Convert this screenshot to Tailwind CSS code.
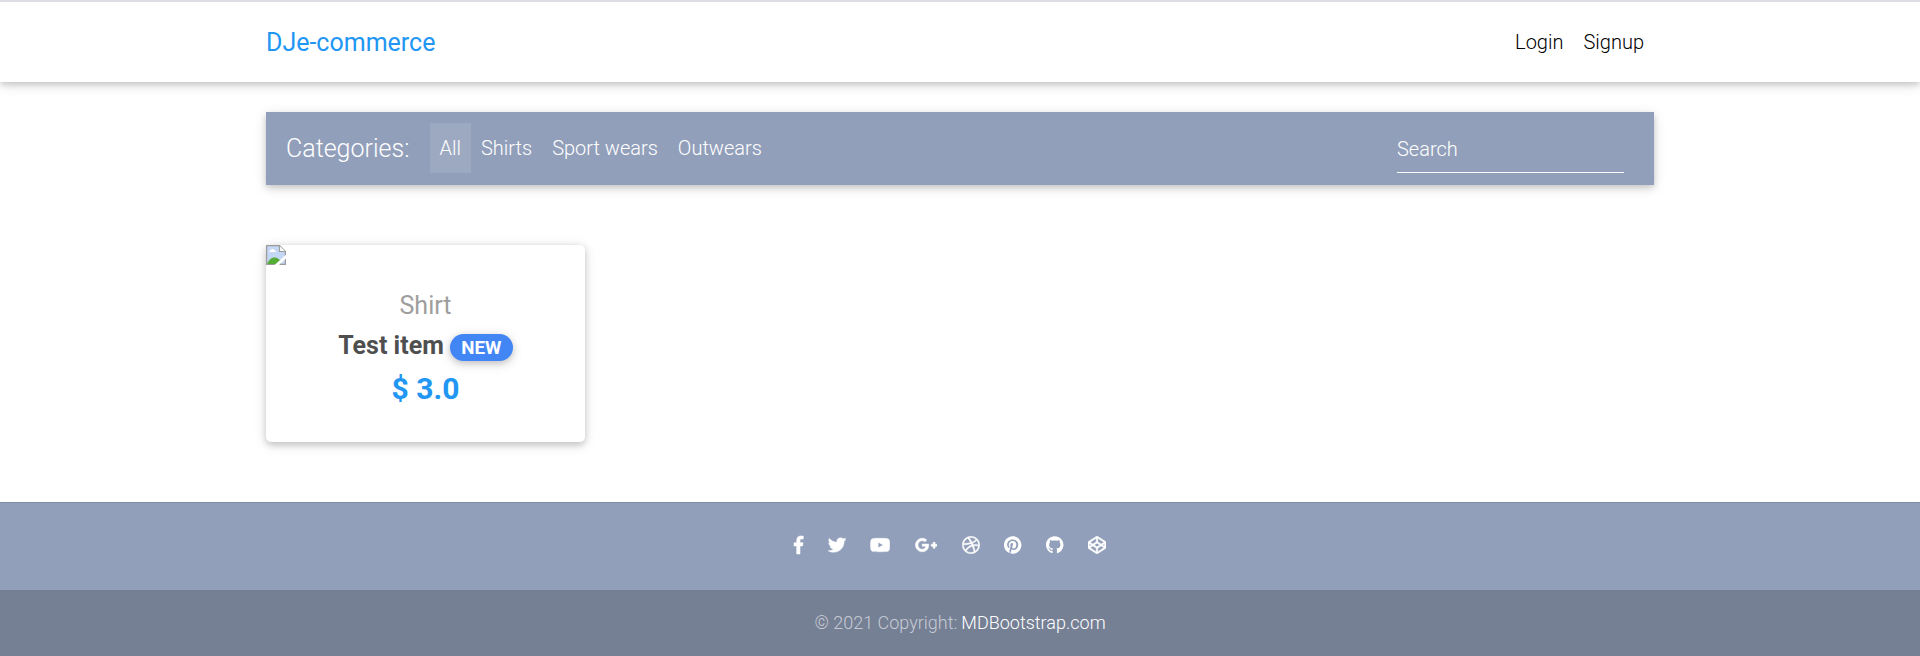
<!DOCTYPE html>
<html lang="en">
<head>
<meta charset="utf-8">
<title>DJe-commerce</title>
<script src="https://cdn.jsdelivr.net/npm/@tailwindcss/browser@4"></script>
</head>
<body class="flex h-[656px] flex-col overflow-hidden bg-white font-[Roboto,sans-serif] text-[20px] leading-[30px] font-light text-[#212529]">
<header class="h-[82px] border-t-2 border-[#dcdce2] shadow-[0_2.5px_6.25px_rgba(0,0,0,0.16),0_2.5px_12.5px_rgba(0,0,0,0.12)]">
  <nav class="mx-auto flex h-full w-[1388px] items-center justify-between">
    <a class="pt-0.5 text-[25px] font-normal text-[#2196f3]">DJe-commerce</a>
    <div class="flex gap-5 pr-[10px] text-black"><a>Login</a><a>Signup</a></div>
  </nav>
</header>
<main class="mx-auto w-[1388px] flex-1 pt-[30px]">
  <nav class="flex h-[73px] items-start bg-[#929fba] pt-[11px] pr-[30px] pl-5 leading-[50px] text-white shadow-[0_2.5px_6.25px_rgba(0,0,0,0.16),0_2.5px_12.5px_rgba(0,0,0,0.12)]">
    <span class="mr-5 w-[124px] text-[25px] leading-[52px] whitespace-nowrap">Categories:</span>
    <div class="flex">
      <a class="bg-white/10 pr-[10px] pl-[9.5px]">All</a><a class="px-[10px]">Shirts</a><a class="px-[10px]">Sport wears</a><a class="px-[10px]">Outwears</a>
    </div>
    <div class="ml-auto h-[50px] w-[227px] border-b border-white leading-[52px]">Search</div>
  </nav>
  <article class="mt-[60px] flex h-[197px] w-[319px] flex-col rounded-[5px] bg-white shadow-[0_2.5px_6.25px_rgba(0,0,0,0.16),0_2.5px_12.5px_rgba(0,0,0,0.12)]">
    <svg class="size-5 shrink-0" viewBox="0 0 20 20">
      <path d="M.6.6h13l5.8 5.8v13H.6z" fill="#c4d7f5" stroke="#9b9b9b" stroke-width="1.2"/>
      <path d="M1.2 19c1.5-4 4-6.500 7.300-6.500 2.500 0 4.500 1.300 6 3.500L15 19z" fill="#55ac36"/>
      <path d="M3 7c0-1 .8-1.500 1.600-1.500C5 4.300 5.700 4 6.500 4c1.200 0 1.800.8 2 1.600C9.400 5.600 10 6.200 10 7z" fill="#fff"/>
      <path d="M13.500.8v5.700h5.700" fill="#fff" stroke="#9b9b9b" stroke-width="1.200"/>
      <path d="M8.500 20 20 9.800v3.700L13 20z" fill="#fff"/>
    </svg>
    <div class="flex flex-col items-center pt-[26px]">
      <h5 class="text-[25px] leading-[30px] font-normal text-[#9e9e9e]">Shirt</h5>
      <div class="mt-[9px] flex h-[32px] items-center gap-[6px] text-[25px] font-bold text-[#4f4f4f]">
        <strong class="font-bold">Test item</strong>
        <span class="mt-[3px] flex h-[27px] w-[63px] items-center justify-center rounded-full bg-[#4285f4] text-[18.75px] text-white shadow-[0_2.5px_6.25px_rgba(0,0,0,0.16),0_2.5px_12.5px_rgba(0,0,0,0.12)]">NEW</span>
      </div>
      <h4 class="mt-[9px] text-[30px] leading-[36px] font-bold text-[#2196f3]">$ 3.0</h4>
    </div>
  </article>
</main>
<footer class="h-[154px] shrink-0 bg-[#929fba] text-[18px] text-white">
  <div class="flex h-[88px] items-center justify-center gap-[4.450px] border-t border-[#7f8ca6] pb-[3px]">
    <svg class="mr-5 h-[18px] w-[9.280px] overflow-visible" viewBox="0 0 264 512" fill="currentColor" stroke="currentColor" stroke-width="16"><path d="M76.700 512V283H0v-91h76.700v-71.700C76.700 42.400 124.300 0 193.800 0c33.300 0 61.900 2.500 70.200 3.600V85h-48.200c-37.800 0-45.100 18-45.100 44.300V192H256l-11.700 91h-73.600v229z"/></svg>
    <svg class="mr-5 h-[18px] w-[18px]" viewBox="0 0 512 512" fill="currentColor" stroke="currentColor" stroke-width="10"><path d="M459.370 151.716c.325 4.548.325 9.097.325 13.645 0 138.720-105.583 298.558-298.558 298.558-59.452 0-114.680-17.219-161.137-47.106 8.447.974 16.568 1.299 25.340 1.299 49.055 0 94.213-16.568 130.274-44.832-46.132-.975-84.792-31.188-98.112-72.772 6.498.974 12.995 1.624 19.818 1.624 9.421 0 18.843-1.300 27.614-3.573-48.081-9.747-84.143-51.980-84.143-102.985v-1.299c13.969 7.797 30.214 12.670 47.431 13.319-28.264-18.843-46.781-51.005-46.781-87.391 0-19.492 5.197-37.360 14.294-52.954 51.655 63.675 129.300 105.258 216.365 109.807-1.624-7.797-2.599-15.918-2.599-24.040 0-57.828 46.782-104.934 104.934-104.934 30.213 0 57.502 12.670 76.670 33.137 23.715-4.548 46.456-13.320 66.599-25.340-7.798 24.366-24.366 44.833-46.132 57.827 21.117-2.273 41.584-8.122 60.426-16.243-14.292 20.791-32.161 39.308-52.628 54.253z"/></svg>
    <svg class="mr-5 h-[18px] w-[20.250px]" viewBox="0 0 576 512" fill="currentColor" stroke="currentColor" stroke-width="14"><path d="M549.655 124.083c-6.281-23.650-24.787-42.276-48.284-48.597C458.781 64 288 64 288 64S117.220 64 74.629 75.486c-23.497 6.322-42.003 24.947-48.284 48.597-11.412 42.867-11.412 132.305-11.412 132.305s0 89.438 11.412 132.305c6.281 23.650 24.787 41.500 48.284 47.821C117.220 448 288 448 288 448s170.780 0 213.371-11.486c23.497-6.321 42.003-24.171 48.284-47.821 11.412-42.867 11.412-132.305 11.412-132.305s0-89.438-11.412-132.305zm-317.510 213.508V175.185l142.739 81.205-142.739 81.201z"/></svg>
    <svg class="mr-5 h-[18px] w-[22.500px]" viewBox="0 0 640 512" fill="currentColor" stroke="currentColor" stroke-width="14"><path d="M386.061 228.496c1.834 9.692 3.143 19.384 3.143 31.956C389.204 370.205 315.599 448 204.800 448c-106.084 0-192-85.915-192-192s85.916-192 192-192c51.864 0 95.083 18.859 128.611 50.292l-52.126 50.030c-14.145-13.621-39.028-29.599-76.485-29.599-65.484 0-118.920 54.221-118.920 121.277 0 67.056 53.436 121.277 118.920 121.277 75.961 0 104.513-54.745 108.965-82.773H204.800v-66.009h181.261zm185.406 6.437V179.200h-56.001v55.733h-55.733v56.001h55.733v55.733h56.001v-55.733H627.200v-56.001h-55.733z"/></svg>
    <svg class="mr-5 h-[18px] w-[18px]" viewBox="0 0 512 512" fill="currentColor" stroke="currentColor" stroke-width="12"><path d="M256 8C119.252 8 8 119.252 8 256s111.252 248 248 248 248-111.252 248-248S392.748 8 256 8zm163.970 114.366c29.503 36.046 47.369 81.957 47.835 131.955-6.984-1.477-77.018-15.682-147.502-6.818-5.752-14.041-11.181-26.393-18.617-41.614 78.321-31.977 113.818-77.482 118.284-83.523zM396.421 97.870c-3.810 5.427-35.697 48.286-111.021 76.519-34.712-63.776-73.185-116.168-79.040-124.008 67.176-16.193 137.966 1.270 190.061 47.489zm-230.480-33.250c5.585 7.659 43.438 60.116 78.537 122.509-99.087 26.313-186.360 25.934-195.834 25.809C62.380 147.205 106.678 92.573 165.941 64.620zM44.170 256.323c0-2.166.043-4.322.108-6.473 9.268.19 111.920 1.513 217.706-30.146 6.064 11.868 11.857 23.915 17.174 35.949-76.599 21.575-146.194 83.527-180.531 142.306C64.794 360.405 44.170 310.730 44.170 256.323zm81.807 167.113c22.127-45.233 82.178-103.622 167.579-132.756 29.740 77.283 42.039 142.053 45.189 160.638-68.112 29.013-150.015 21.053-212.768-27.882zm248.380 8.489c-2.171-12.886-13.446-74.897-41.152-151.033 66.380-10.626 124.700 6.768 131.947 9.055-9.442 58.941-43.273 109.844-90.795 141.978z"/></svg>
    <svg class="mr-5 h-[18px] w-[17.440px]" viewBox="0 0 496 512" fill="currentColor"><path d="M496 256c0 137-111 248-248 248-25.600 0-50.200-3.900-73.400-11.100 10.100-16.500 25.200-43.500 30.800-65 3-11.600 15.400-59 15.400-59 8.100 15.400 31.700 28.500 56.800 28.500 74.800 0 128.700-68.800 128.700-154.300 0-81.900-66.900-143.200-152.900-143.200-107 0-163.900 71.800-163.900 150.100 0 36.400 19.400 81.700 50.300 96.100 4.700 2.200 7.200 1.200 8.300-3.300.8-3.400 5-20.300 6.900-28.100.6-2.500.3-4.700-1.700-7.100-10.100-12.500-18.300-35.300-18.300-56.600 0-54.700 41.400-107.600 112-107.600 60.900 0 103.600 41.500 103.600 100.900 0 67.100-33.900 113.600-78 113.600-24.300 0-42.600-20.100-36.700-44.800 7-29.500 20.500-61.300 20.500-82.600 0-19-10.200-34.900-31.400-34.900-24.900 0-44.900 25.700-44.900 60.200 0 22 7.400 36.800 7.400 36.800s-24.500 103.800-29 123.200c-5 21.400-3 51.600-.9 71.200C65.400 450.900 0 361.100 0 256 0 119 111 8 248 8s248 111 248 248z"/></svg>
    <svg class="mr-5 h-[18px] w-[17.440px]" viewBox="0 0 496 512" fill="currentColor"><path d="M248 8C106 8 0 113.300 0 252c0 110.900 69.800 205.800 169.500 239.200 12.800 2.300 17.300-5.600 17.300-12.100 0-6.200-.3-40.400-.3-61.400 0 0-70 15-84.700-29.800 0 0-11.400-29.100-27.800-36.600 0 0-22.900-15.700 1.600-15.400 0 0 24.900 2 38.600 25.800 21.900 38.600 58.600 27.500 72.900 20.900 2.300-16 8.800-27.100 16-33.700-55.900-6.200-112.300-14.300-112.300-110.500 0-27.500 7.600-41.300 23.600-58.900-2.600-6.500-11.100-33.300 2.600-67.900 20.900-6.500 69 27 69 27 20-5.600 41.500-8.500 62.800-8.500s42.800 2.900 62.800 8.500c0 0 48.100-33.600 69-27 13.700 34.700 5.200 61.400 2.600 67.900 16 17.700 25.800 31.500 25.800 58.900 0 96.500-58.900 104.200-114.800 110.500 9.200 7.900 17 22.900 17 46.400 0 33.700-.3 75.400-.3 83.600 0 6.500 4.600 14.400 17.300 12.100C428.200 457.800 496 362.900 496 252 496 113.300 390 8 248 8z"/></svg>
    <svg class="mr-5 h-[18px] w-[18px]" viewBox="0 0 512 512" fill="currentColor" stroke="currentColor" stroke-width="12"><path d="M502.285 159.704l-234-156c-7.987-4.915-16.511-4.960-24.571 0l-234 156C3.714 163.703 0 170.847 0 177.989v155.999c0 7.143 3.714 14.286 9.715 18.286l234 156.022c7.987 4.915 16.511 4.960 24.571 0l234-156.022c6-3.999 9.715-11.143 9.715-18.286V177.989c-.001-7.142-3.715-14.286-9.716-18.285zM278 63.131l172.286 114.858-76.857 51.429L278 165.703V63.131zm-44 0v102.572l-95.429 63.715-76.857-51.429L234 63.131zM44 219.132l55.143 36.857L44 292.847v-73.715zm190 229.715L61.714 333.989l76.857-51.429L234 346.275v102.572zm22-140.858l-77.715-52 77.715-52 77.715 52-77.715 52zm22 140.858V346.275l95.429-63.715 76.857 51.429L278 448.847zm190-156.001l-55.143-36.857L468 219.132v73.714z"/></svg>
  </div>
  <div class="flex h-[66px] items-center justify-center gap-1 bg-[#758095]"><span class="text-white/60">© 2021 Copyright:</span><a>MDBootstrap.com</a></div>
</footer>
</body>
</html>
